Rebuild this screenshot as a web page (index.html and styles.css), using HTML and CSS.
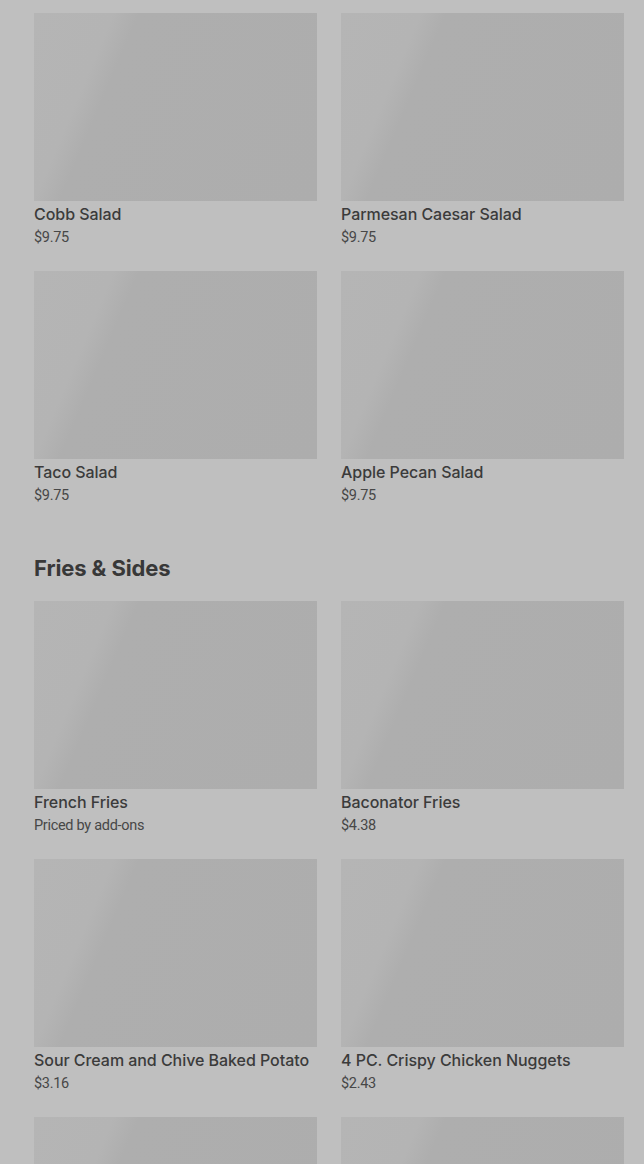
FILE: index.html
```html
<!DOCTYPE html>
<html lang="en">
<head>
<meta charset="utf-8">
<title>Menu</title>
<link rel="stylesheet" href="styles.css">
</head>
<body>
<main class="menu">
  <section class="section">
    <div class="grid">
      <div class="card"><div class="thumb"></div><div class="name">Cobb Salad</div><div class="price">$9.75</div></div>
      <div class="card"><div class="thumb"></div><div class="name">Parmesan Caesar Salad</div><div class="price">$9.75</div></div>
      <div class="card"><div class="thumb"></div><div class="name">Taco Salad</div><div class="price">$9.75</div></div>
      <div class="card"><div class="thumb"></div><div class="name">Apple Pecan Salad</div><div class="price">$9.75</div></div>
    </div>
  </section>
  <section class="section">
    <h2 class="heading">Fries &amp; Sides</h2>
    <div class="grid">
      <div class="card"><div class="thumb"></div><div class="name">French Fries</div><div class="price">Priced by add-ons</div></div>
      <div class="card"><div class="thumb"></div><div class="name">Baconator Fries</div><div class="price">$4.38</div></div>
      <div class="card"><div class="thumb"></div><div class="name">Sour Cream and Chive Baked Potato</div><div class="price">$3.16</div></div>
      <div class="card"><div class="thumb"></div><div class="name">4 PC. Crispy Chicken Nuggets</div><div class="price">$2.43</div></div>
      <div class="card"><div class="thumb"></div></div>
      <div class="card"><div class="thumb"></div></div>
    </div>
  </section>
</main>
</body>
</html>
```

FILE: styles.css
```css
html, body {
  margin: 0;
  padding: 0;
  background: #bfbfbf;
  overflow: hidden;
}
.menu {
  padding: 13px 20px 0 34px;
  font-family: Inter, "Liberation Sans", sans-serif;
  color: #3a3a3a;
}
.section + .section {
  margin-top: 49px;
}
.grid {
  display: grid;
  grid-template-columns: 283px 283px;
  column-gap: 24px;
  row-gap: 24px;
}
.card {
  display: flex;
  flex-direction: column;
}
.thumb {
  height: 188px;
  background: linear-gradient(113deg, #b5b5b5 0%, #b4b4b4 22%, #aeaeae 29%, #adadad 100%);
}
.name {
  margin-top: 2px;
  font-size: 16px;
  font-weight: 500;
  line-height: 22px;
  color: #3b3b3b;
  white-space: nowrap;
  letter-spacing: -0.05px;
}
.price {
  margin-top: 4px;
  font-family: Roboto, "Liberation Sans", sans-serif;
  font-size: 14.5px;
  line-height: 18px;
  color: #474747;
  letter-spacing: -0.3px;
}
.heading {
  margin: 0 0 19px;
  font-size: 22px;
  font-weight: 700;
  line-height: 28px;
  letter-spacing: -0.1px;
  color: #383838;
}
```
